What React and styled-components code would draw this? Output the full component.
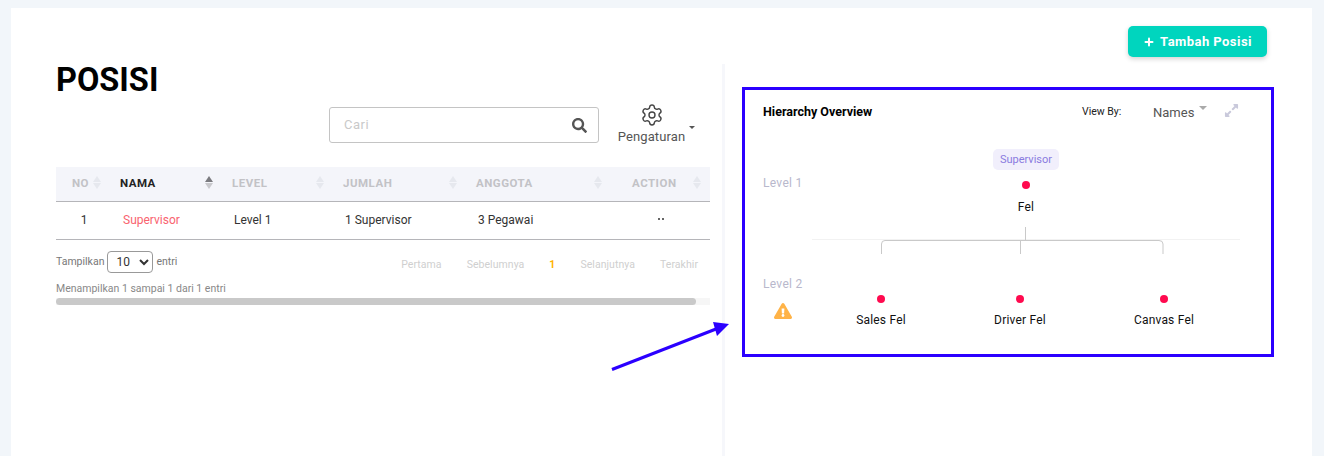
import React from "react";
import styled, { createGlobalStyle } from "styled-components";
import { FaSearch, FaExclamationTriangle, FaExpandAlt } from "react-icons/fa";
import { Settings, Plus } from "lucide-react";

const Global = createGlobalStyle`
  html, body { margin: 0; padding: 0; height: 456px; overflow: hidden; background: #f2f6fa; }
  * { box-sizing: border-box; }
  body { font-family: Roboto, "Liberation Sans", sans-serif; }
`;

const Page = styled.div`
  position: relative;
  width: 1324px;
  height: 456px;
  padding: 8px 12px 0 11px;
  overflow: hidden;
`;
const Card = styled.div`
  background: #fff;
  height: 448px;
  display: flex;
  flex-direction: column;
`;
const TopBar = styled.div`
  display: flex;
  justify-content: flex-end;
  padding: 18px 45px 0 0;
  height: 56px;
`;
const AddButton = styled.button`
  width: 139px;
  height: 31px;
  border: 0;
  border-radius: 5px;
  background: #00d5be;
  color: #fff;
  font: 700 13px Roboto, sans-serif;
  letter-spacing: 0.45px;
  box-shadow: 0 2px 5px rgba(0, 0, 0, 0.18);
  display: flex;
  align-items: center;
  justify-content: center;
  gap: 5px;
  padding: 0;
`;
const Columns = styled.div`
  flex: 1;
  display: flex;
  min-height: 0;
`;
const LeftPane = styled.div`
  width: 711px;
  padding: 0 12px 0 45px;
`;
const RightPane = styled.div`
  border-left: 3px solid #f6f7fb;
  padding: 23px 0 0 17px;
`;
const Title = styled.h1`
  margin: 0;
  height: 43px;
  font: 700 32.5px/32px Roboto, sans-serif;
  color: #000;
`;
const Tools = styled.div`
  display: flex;
  align-items: flex-start;
  height: 60px;
  padding-left: 273px;
`;
const SearchBox = styled.div`
  width: 270px;
  height: 36px;
  border: 1px solid #c4c4c4;
  border-radius: 3px;
  display: flex;
  align-items: center;
  justify-content: space-between;
  padding: 0 11px 0 14px;
  color: #555;
`;
const Placeholder = styled.span`
  font-size: 13px;
  letter-spacing: 0.5px;
  color: #c9c9c9;
  margin-top: -2px;
`;
const SettingsButton = styled.div`
  position: relative;
  width: 67px;
  margin: -4px 0 0 19px;
  display: flex;
  flex-direction: column;
  align-items: center;
  color: #444;
`;
const SettingsLabel = styled.span`
  font-size: 13px;
  letter-spacing: 0.1px;
  color: #555;
  margin-top: 2px;
`;
const Caret = styled.span`
  position: absolute;
  left: 71px;
  top: 23px;
  border-left: 3px solid transparent;
  border-right: 3px solid transparent;
  border-top: 3px solid #555;
`;
const Table = styled.table`
  width: 654px;
  border-collapse: collapse;
  table-layout: fixed;
`;
const HeadCell = styled.th`
  position: relative;
  height: 34px;
  padding: 0 0 1px ${(p) => p.$pad ?? 10}px;
  background: #f4f5fa;
  border-bottom: 1px solid #b5b5b9;
  text-align: left;
  font-size: 11.5px;
  font-weight: 700;
  letter-spacing: 0.5px;
  color: ${(p) => (p.$active ? "#222" : "#c2c2c6")};
`;
const SortIcon = styled.span`
  position: absolute;
  right: 9px;
  top: 9px;
  width: 8px;
  height: 14px;
  display: flex;
  flex-direction: column;
  gap: 1px;
  &::before, &::after {
    content: "";
    border-left: 4px solid transparent;
    border-right: 4px solid transparent;
  }
  &::before { border-bottom: 6px solid ${(p) => (p.$active ? "#7b7b80" : "#e6e8ee")}; }
  &::after { border-top: 6px solid ${(p) => (p.$active ? "#c9c9cd" : "#e6e8ee")}; }
`;
const BodyCell = styled.td`
  height: 38px;
  padding: 0 0 1px ${(p) => p.$pad ?? 12}px;
  border-bottom: 1px solid #b5b5b9;
  font-size: 12px;
  color: ${(p) => p.$color || "#333"};
  text-align: ${(p) => p.$align || "left"};
`;
const Dots = styled.span`
  display: inline-flex;
  gap: 2px;
  vertical-align: 4px;
  & > i { width: 2px; height: 2px; border-radius: 50%; background: #333; }
`;
const FooterRow = styled.div`
  display: flex;
  justify-content: space-between;
  align-items: center;
  height: 22px;
  margin-top: 11px;
  padding-right: 12px;
`;
const LengthControl = styled.div`
  display: flex;
  align-items: center;
  gap: 3px;
  font-size: 10.5px;
  color: #777;
`;
const LengthSelect = styled.select`
  width: 46px;
  height: 22px;
  border: 1px solid #999;
  border-radius: 4px;
  background: #fff;
  font: 12px Roboto, sans-serif;
  color: #333;
  padding: 0 0 0 4px;
`;
const Pager = styled.div`
  display: flex;
  gap: 25px;
  font-size: 10.5px;
  margin-top: 6px;
  letter-spacing: 0.05px;
  color: #cfcfcf;
`;
const CurrentPage = styled.span`
  font-weight: 700;
  color: #ffb300;
`;
const Info = styled.div`
  margin-top: 9px;
  font-size: 10.5px;
  line-height: 13px;
  color: #888;
`;
const ScrollTrack = styled.div`
  margin-top: 3px;
  width: 654px;
  height: 7px;
  background: #f6f6f6;
`;
const ScrollThumb = styled.div`
  width: 640px;
  height: 7px;
  border-radius: 4px;
  background: #c9c9c9;
`;
const Overview = styled.section`
  width: 532px;
  height: 270px;
  border: 3px solid #2b00ff;
  padding: 12px 0 0 18px;
`;
const OverviewHead = styled.header`
  display: flex;
  align-items: center;
  height: 18px;
`;
const OverviewTitle = styled.h2`
  margin: 0;
  width: 319px;
  font-size: 12.5px;
  font-weight: 700;
  color: #000;
`;
const ViewBy = styled.span`
  width: 71px;
  font-size: 10.5px;
  color: #222;
`;
const Names = styled.span`
  font-size: 13px;
  color: #555;
  margin-top: 2px;
`;
const NamesCaret = styled.span`
  border-left: 4px solid transparent;
  border-right: 4px solid transparent;
  border-top: 4px solid #aaa;
  margin: -7px 17px 0 5px;
`;
const ExpandIcon = styled.span`
  display: flex;
  color: #c9c9db;
  margin-top: -2px;
`;
const LevelRow = styled.div`
  display: grid;
  grid-template-columns: 49px 428px;
`;
const LevelLabel = styled.div`
  font-size: 12px;
  letter-spacing: 0.3px;
  line-height: 14px;
  color: #b8b8cc;
  padding-top: ${(p) => p.$top}px;
`;
const WarnIcon = styled.div`
  display: flex;
  color: #ffb347;
  margin: 11px 0 0 11px;
`;
const TopNode = styled.div`
  display: flex;
  flex-direction: column;
  align-items: center;
  padding-top: 29px;
`;
const Chip = styled.span`
  height: 21px;
  padding: 0 7px;
  border-radius: 5px;
  background: #f1effc;
  color: #8a7be0;
  font-size: 11px;
  line-height: 21px;
`;
const Dot = styled.span`
  width: 8px;
  height: 8px;
  border-radius: 50%;
  background: #ff0a4f;
  margin-top: ${(p) => p.$top}px;
`;
const NodeName = styled.span`
  font-size: 12px;
  line-height: 14px;
  letter-spacing: 0.2px;
  color: #111;
  margin-top: ${(p) => p.$top}px;
`;
const Connector = styled.svg`
  display: block;
  margin-top: 13px;
`;
const ChildGrid = styled.div`
  display: grid;
  grid-template-columns: 138px 140px 148px;
  padding-top: 40px;
`;
const ChildNode = styled.div`
  display: flex;
  flex-direction: column;
  align-items: center;
`;
const Arrow = styled.svg`
  position: absolute;
  left: 600px;
  top: 310px;
`;

const heads = [
  ["NO", 54, 16],
  ["NAMA", 112, 10, true],
  ["LEVEL", 111, 10],
  ["JUMLAH", 133, 10],
  ["ANGGOTA", 145, 10],
  ["ACTION", 99, 21],
];

export default function App() {
  return (
    <Page>
      <Global />
      <Card>
        <TopBar>
          <AddButton><Plus size={12} strokeWidth={4} />Tambah Posisi</AddButton>
        </TopBar>
        <Columns>
          <LeftPane>
            <Title>POSISI</Title>
            <Tools>
              <SearchBox>
                <Placeholder>Cari</Placeholder>
                <FaSearch size={15} />
              </SearchBox>
              <SettingsButton>
                <Settings size={24} strokeWidth={1.4} />
                <SettingsLabel>Pengaturan</SettingsLabel>
                <Caret />
              </SettingsButton>
            </Tools>
            <Table>
              <colgroup>
                {heads.map(([h, w]) => <col key={h} width={w} />)}
              </colgroup>
              <thead>
                <tr>
                  {heads.map(([h, , pad, active]) => (
                    <HeadCell key={h} $pad={pad} $active={active}>
                      {h}
                      <SortIcon $active={active} />
                    </HeadCell>
                  ))}
                </tr>
              </thead>
              <tbody>
                <tr>
                  <BodyCell $align="center" $pad={2}>1</BodyCell>
                  <BodyCell $color="#f9636f" $pad={13}>Supervisor</BodyCell>
                  <BodyCell>Level 1</BodyCell>
                  <BodyCell>1 Supervisor</BodyCell>
                  <BodyCell>3 Pegawai</BodyCell>
                  <BodyCell $align="center" $pad={0}><Dots><i /><i /></Dots></BodyCell>
                </tr>
              </tbody>
            </Table>
            <FooterRow>
              <LengthControl>
                Tampilkan
                <LengthSelect defaultValue="10"><option>10</option></LengthSelect>
                entri
              </LengthControl>
              <Pager>
                <span>Pertama</span>
                <span>Sebelumnya</span>
                <CurrentPage>1</CurrentPage>
                <span>Selanjutnya</span>
                <span>Terakhir</span>
              </Pager>
            </FooterRow>
            <Info>Menampilkan 1 sampai 1 dari 1 entri</Info>
            <ScrollTrack><ScrollThumb /></ScrollTrack>
          </LeftPane>
          <RightPane>
            <Overview>
              <OverviewHead>
                <OverviewTitle>Hierarchy Overview</OverviewTitle>
                <ViewBy>View By:</ViewBy>
                <Names>Names</Names>
                <NamesCaret />
                <ExpandIcon><FaExpandAlt size={15} /></ExpandIcon>
              </OverviewHead>
              <LevelRow>
                <LevelLabel $top={56}>Level 1</LevelLabel>
                <TopNode>
                  <Chip>Supervisor</Chip>
                  <Dot $top={11} />
                  <NodeName $top={11}>Fel</NodeName>
                </TopNode>
              </LevelRow>
              <LevelRow>
                <span />
                <Connector width="428" height="28" viewBox="0 0 428 28">
                  <path d="M0 12.5H428" stroke="#f2f2f2" fill="none" />
                  <path d="M213.5 0V13M69.5 27V17q0-3.5 3.5-3.5H347q4 0 4 3.5V27M208.5 14V27" stroke="#c9c9c9" fill="none" />
                </Connector>
              </LevelRow>
              <LevelRow>
                <LevelLabel $top={22}>
                  Level 2
                  <WarnIcon><FaExclamationTriangle size={18} /></WarnIcon>
                </LevelLabel>
                <ChildGrid>
                  {["Sales Fel", "Driver Fel", "Canvas Fel"].map((n) => (
                    <ChildNode key={n}>
                      <Dot $top={0} />
                      <NodeName $top={10}>{n}</NodeName>
                    </ChildNode>
                  ))}
                </ChildGrid>
              </LevelRow>
            </Overview>
          </RightPane>
        </Columns>
      </Card>
      <Arrow width="140" height="70" viewBox="600 310 140 70">
        <path d="M612 369.5L716 329" stroke="#2b00ff" strokeWidth="3" fill="none" />
        <path d="M729 324L713 322L717 336Z" fill="#2b00ff" />
      </Arrow>
    </Page>
  );
}
